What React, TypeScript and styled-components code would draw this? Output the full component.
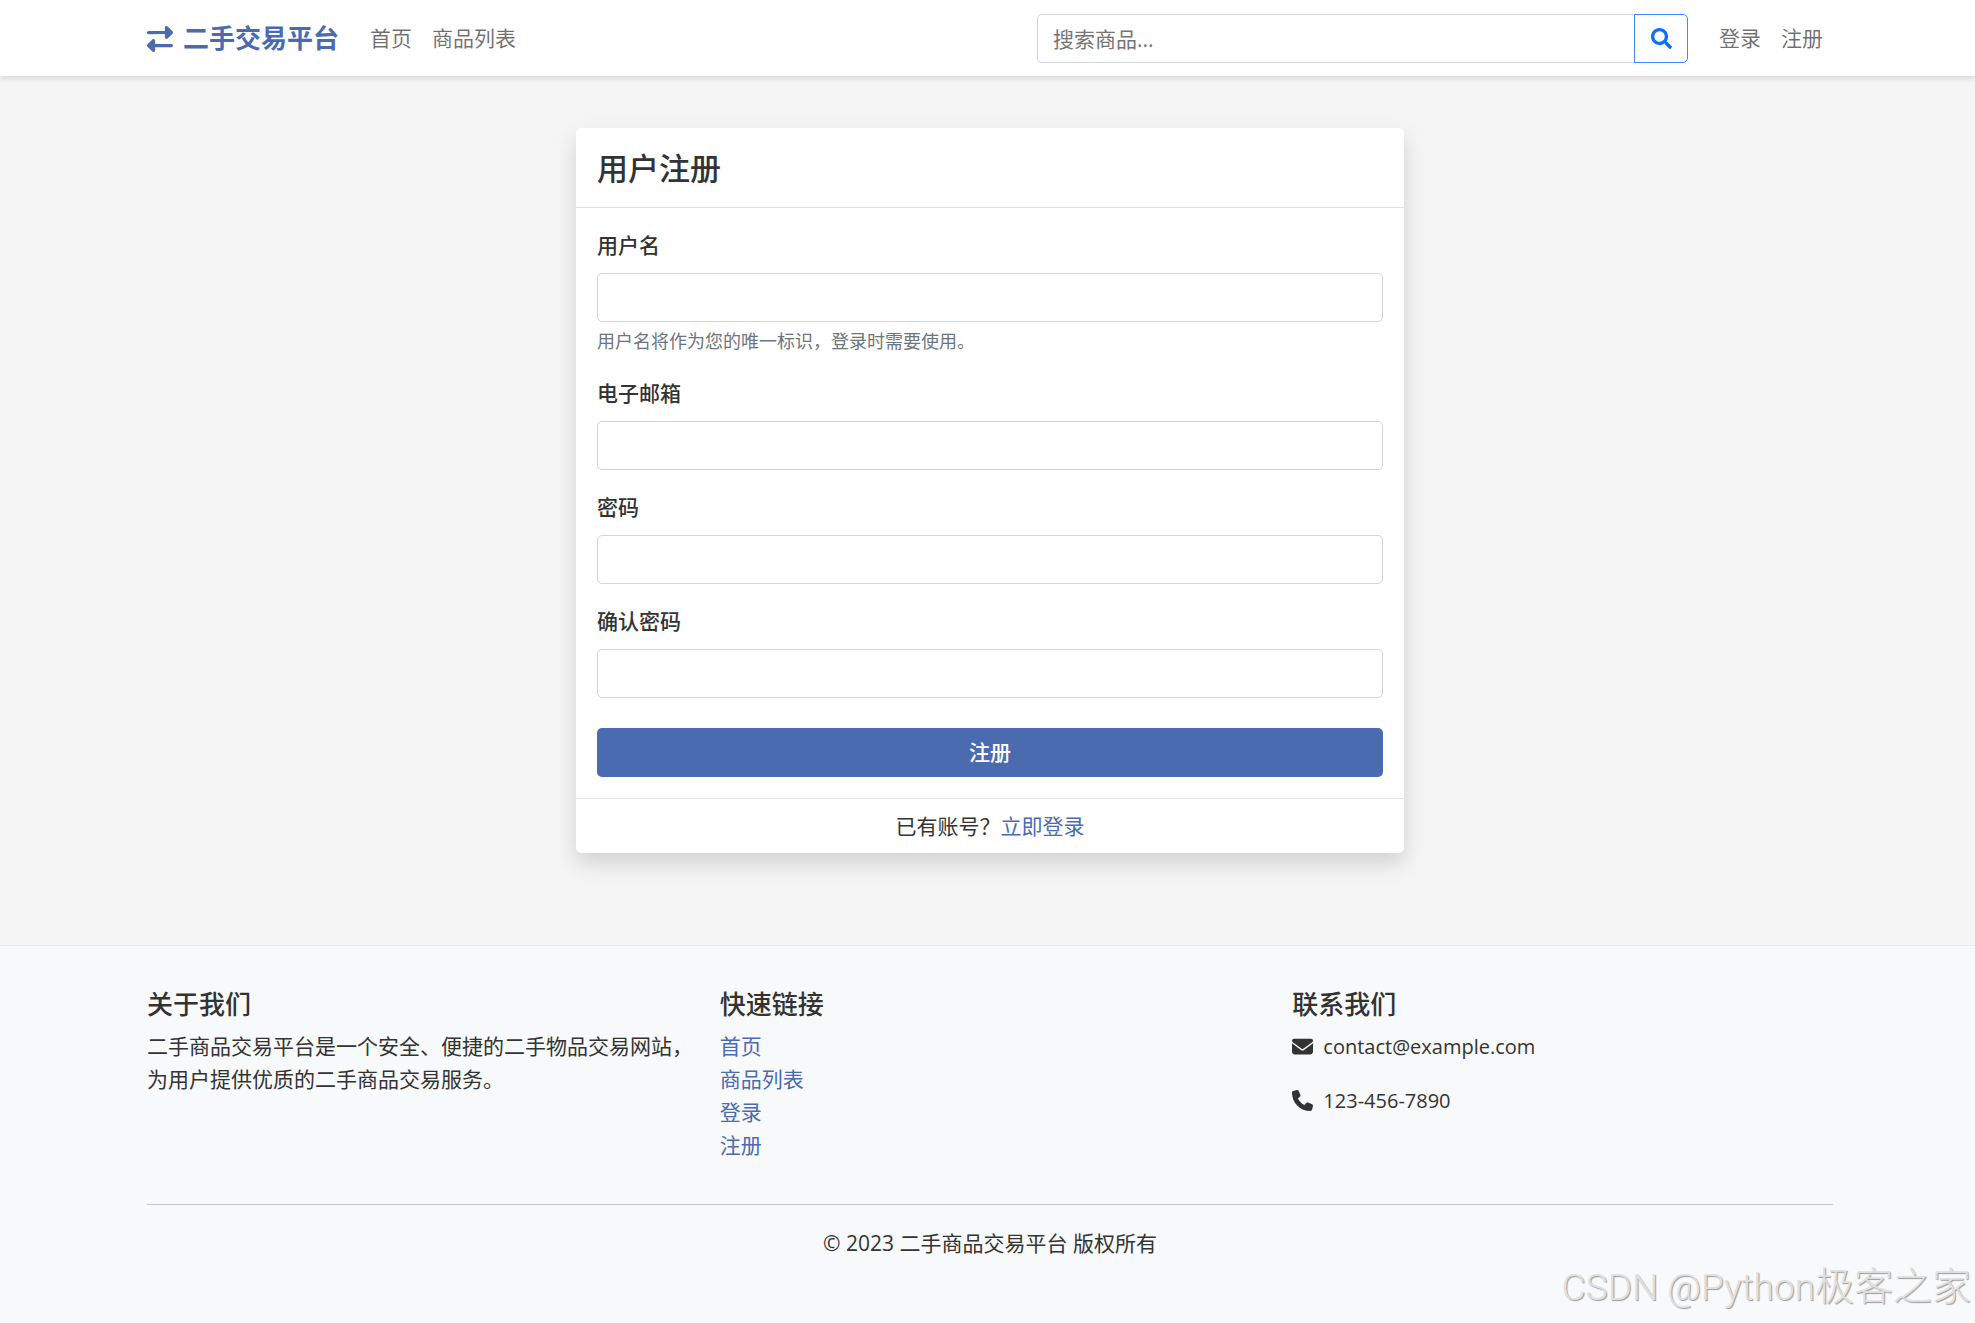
import React from "react";
import styled, { createGlobalStyle } from "styled-components";
import { FaEnvelope, FaPhone, FaRightLeft } from "react-icons/fa6";
import { FaSearch } from "react-icons/fa";

const GlobalStyle = createGlobalStyle`
  *, *::before, *::after { box-sizing: border-box; }
  body {
    margin: 0;
    background: #f5f5f5;
    color: #333;
    font-family: "Open Sans", "Noto Sans CJK SC", sans-serif;
    font-size: 21px;
    line-height: 33px;
  }
  h1, h2, p, ul { margin: 0; padding: 0; }
  ul { list-style: none; }
  a { color: #4a6baf; text-decoration: none; }
  input, button { font: inherit; }
`;

const Page = styled.div`
  display: flex;
  flex-direction: column;
  min-height: 100vh;
`;

const Container = styled.div`
  width: 100%;
  max-width: 1686px;
  margin: 0 auto;
`;

const Header = styled.header`
  padding: 14px 0 13px 5px;
  background: #fff;
  box-shadow: 0 3px 5px rgba(0, 0, 0, 0.1);
`;

const NavBar = styled(Container)`
  display: flex;
  align-items: center;
`;

const Brand = styled.a`
  display: flex;
  align-items: center;
  gap: 10px;
  margin-right: 21px;
  font-size: 26px;
  font-weight: 700;
`;

const NavList = styled.ul`
  display: flex;
`;

const NavLink = styled.a`
  display: block;
  padding: 0 10px;
  color: rgba(0, 0, 0, 0.57);
`;

const SearchForm = styled.form`
  display: flex;
  width: 651px;
  margin: 0 21px 0 auto;
`;

const TextInput = styled.input`
  display: block;
  width: 100%;
  min-width: 0;
  height: 49px;
  padding: 0 15px;
  border: 1px solid #d0d5da;
  border-radius: 5px;
  background: #fff;
  color: #333;
  outline-color: #4a6baf;

  &::placeholder {
    color: #757575;
    opacity: 1;
  }
`;

const SearchInput = styled(TextInput)`
  border-radius: 5px 0 0 5px;
  border-right: 0;
`;

const SearchButton = styled.button`
  display: flex;
  flex: none;
  align-items: center;
  justify-content: center;
  width: 54px;
  padding: 0;
  border: 1px solid #3d8bfd;
  border-radius: 0 5px 5px 0;
  background: #fff;
  color: #0d6efd;
`;

const Main = styled.main`
  padding: 52px 0 92px 5px;
`;

const Card = styled.section`
  width: 100%;
  max-width: 828px;
  margin: 0 auto;
  border-radius: 5px;
  background: #fff;
  box-shadow: 0 10px 21px rgba(0, 0, 0, 0.15);
`;

const CardHeader = styled.div`
  padding: 22px 21px 20px;
  border-bottom: 1px solid #e0e0e0;
`;

const CardTitle = styled.h1`
  font-size: 31px;
  font-weight: 500;
  line-height: 37px;
`;

const CardBody = styled.form`
  padding: 21px;
`;

const Field = styled.div`
  margin-bottom: 21px;
`;

const Label = styled.label`
  display: block;
  margin-bottom: 11px;
  font-weight: 500;
`;

const Hint = styled.p`
  margin-top: 5px;
  color: #6c757d;
  font-size: 18px;
  line-height: 29px;
`;

const SubmitButton = styled.button`
  display: block;
  width: 100%;
  height: 49px;
  margin-top: 30px;
  padding: 0;
  border: 0;
  border-radius: 5px;
  background: #4a6baf;
  color: #fff;
  font-weight: 500;
`;

const CardFooter = styled.div`
  padding: 11px 21px 10px;
  border-top: 1px solid #e0e0e0;
  text-align: center;
`;

const Footer = styled.footer`
  flex: 1;
  padding: 43px 0 42px 5px;
  border-top: 1px solid #e9ecef;
  background: #f8f9fb;
`;

const Columns = styled.div`
  display: grid;
  grid-template-columns: repeat(3, 1fr);
  gap: 26px;
  margin-right: -6px;
`;

const Divider = styled.hr`
  height: 1px;
  margin: 42px 0 22px;
  border: 0;
  background: #c6c8ca;
`;

const ColumnTitle = styled.h2`
  margin-bottom: 10px;
  font-size: 26px;
  font-weight: 500;
  line-height: 31px;
`;

const ContactList = styled.ul`
  display: grid;
  gap: 21px;
  font-size: 20px;
`;

const ContactItem = styled.li`
  display: flex;
  align-items: center;
  gap: 10px;

  svg {
    width: 21px;
    height: 21px;
  }
`;

const Copyright = styled.p`
  text-align: center;
`;

const Watermark = styled.div`
  position: absolute;
  top: 1261px;
  right: 4px;
  color: #e0e0e0;
  font-family: Roboto, "Noto Sans CJK SC", sans-serif;
  font-size: 37px;
  font-weight: 300;
  line-height: 52px;
  white-space: nowrap;
  text-shadow: 1px 1px 1px #999;
  pointer-events: none;
`;

const WatermarkName = styled.span`
  font-size: 39px;
`;

const fields = [
  { id: "username", label: "用户名", type: "text", hint: "用户名将作为您的唯一标识，登录时需要使用。" },
  { id: "email", label: "电子邮箱", type: "email" },
  { id: "password", label: "密码", type: "password" },
  { id: "confirm", label: "确认密码", type: "password" },
];

const quickLinks = ["首页", "商品列表", "登录", "注册"];

function NavLinks({ items }: { items: string[] }) {
  return (
    <NavList>
      {items.map((item) => (
        <li key={item}>
          <NavLink href="#">{item}</NavLink>
        </li>
      ))}
    </NavList>
  );
}

export default function App() {
  return (
    <>
      <GlobalStyle />
      <Page>
        <Header>
          <NavBar as="nav">
            <Brand href="#">
              <FaRightLeft />
              二手交易平台
            </Brand>
            <NavLinks items={["首页", "商品列表"]} />
            <SearchForm role="search" onSubmit={(e) => e.preventDefault()}>
              <SearchInput type="search" placeholder="搜索商品..." aria-label="搜索商品" />
              <SearchButton type="submit" aria-label="搜索">
                <FaSearch />
              </SearchButton>
            </SearchForm>
            <NavLinks items={["登录", "注册"]} />
          </NavBar>
        </Header>

        <Main>
          <Card>
            <CardHeader>
              <CardTitle>用户注册</CardTitle>
            </CardHeader>
            <CardBody onSubmit={(e) => e.preventDefault()}>
              {fields.map((field) => (
                <Field key={field.id}>
                  <Label htmlFor={field.id}>{field.label}</Label>
                  <TextInput id={field.id} type={field.type} />
                  {field.hint && <Hint>{field.hint}</Hint>}
                </Field>
              ))}
              <SubmitButton type="submit">注册</SubmitButton>
            </CardBody>
            <CardFooter>
              已有账号？<a href="#">立即登录</a>
            </CardFooter>
          </Card>
        </Main>

        <Footer>
          <Container>
            <Columns>
              <div>
                <ColumnTitle>关于我们</ColumnTitle>
                <p>二手商品交易平台是一个安全、便捷的二手物品交易网站，为用户提供优质的二手商品交易服务。</p>
              </div>
              <div>
                <ColumnTitle>快速链接</ColumnTitle>
                <ul>
                  {quickLinks.map((link) => (
                    <li key={link}>
                      <a href="#">{link}</a>
                    </li>
                  ))}
                </ul>
              </div>
              <div>
                <ColumnTitle>联系我们</ColumnTitle>
                <ContactList>
                  <ContactItem>
                    <FaEnvelope />
                    contact@example.com
                  </ContactItem>
                  <ContactItem>
                    <FaPhone />
                    123-456-7890
                  </ContactItem>
                </ContactList>
              </div>
            </Columns>
            <Divider />
            <Copyright>© 2023 二手商品交易平台 版权所有</Copyright>
          </Container>
        </Footer>
      </Page>
      <Watermark>
        CSDN @Python<WatermarkName>极客之家</WatermarkName>
      </Watermark>
    </>
  );
}
